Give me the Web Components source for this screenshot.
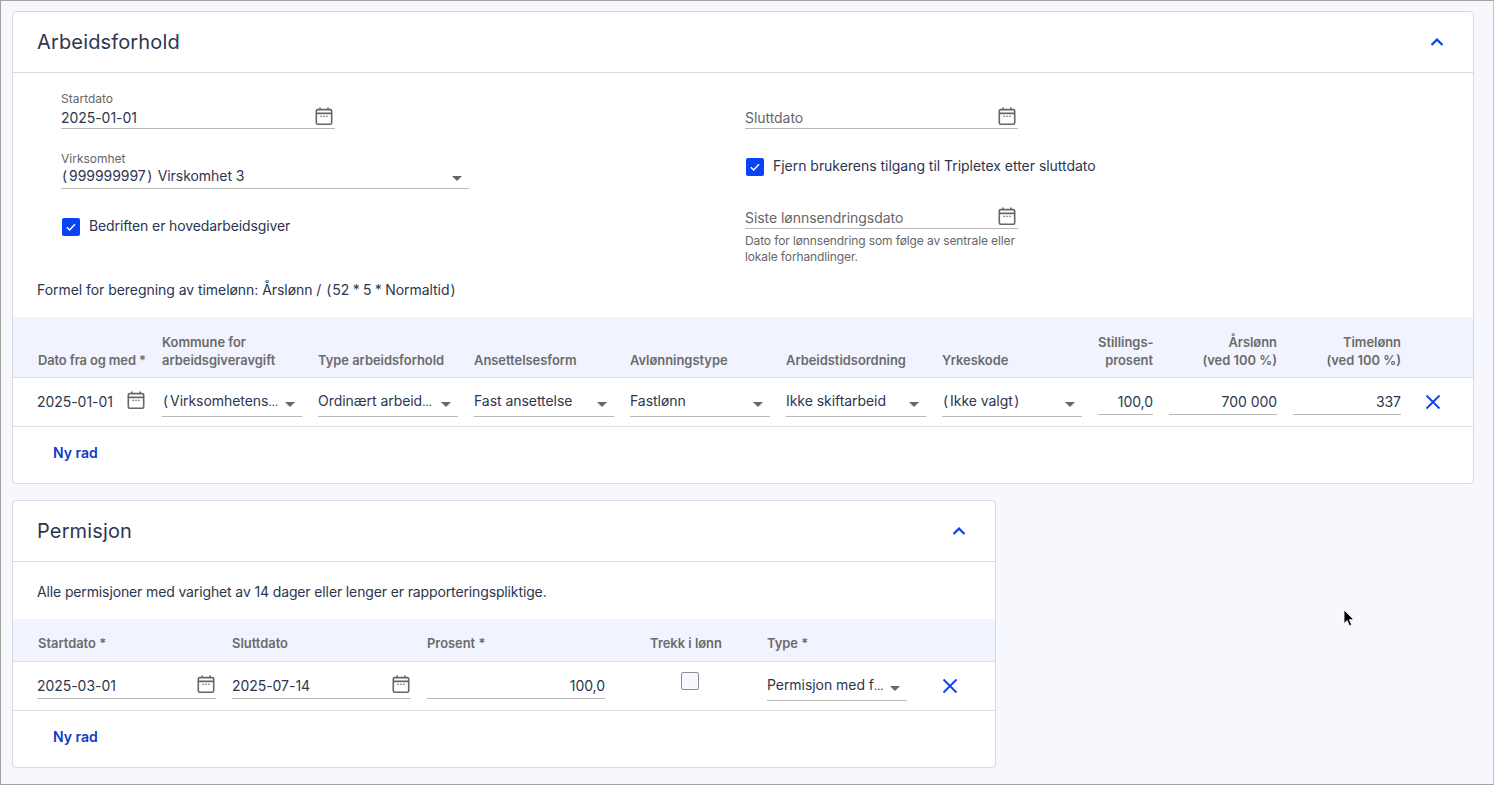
<!DOCTYPE html>
<html lang="no">
<head>
<meta charset="utf-8">
<title>Arbeidsforhold</title>
<style>
  html, body { margin: 0; padding: 0; }
  body { font-family: Inter, "Noto Sans", sans-serif; font-size: 14px; color: #2d3650; }
</style>
</head>
<body>
<tx-page>
  <tx-card heading="Arbeidsforhold" style="--card-width: 1462px">
    <tx-form>
      <div slot="left">
        <tx-field label="Startdato" value="2025-01-01" calendar style="width:274px"></tx-field>
        <tx-field select label="Virksomhet" value="(999999997) Virskomhet 3" style="width:408px; margin-top:23px"></tx-field>
        <tx-check checked style="margin-top:29px; letter-spacing:-.12px">Bedriften er hovedarbeidsgiver</tx-check>
      </div>
      <div slot="right">
        <tx-field placeholder="Sluttdato" calendar style="width:273px"></tx-field>
        <tx-check checked style="margin-top:29px; letter-spacing:-.03px">Fjern brukerens tilgang til Tripletex etter sluttdato</tx-check>
        <tx-field placeholder="Siste lønnsendringsdato" calendar help="Dato for lønnsendring som følge av sentrale eller lokale forhandlinger." style="width:273px; margin-top:16px"></tx-field>
      </div>
    </tx-form>
    <tx-note style="height:52px; padding-top:16px">Formel for beregning av timelønn: Årslønn / <span style="margin:0 1px">(</span><span style="word-spacing:-.5px">52 * 5 * Normaltid</span><span style="margin:0 1px">)</span></tx-note>
    <tx-row head style="--cols:109px repeat(6,140px) 55px 108px 108px 32px; --h:61px">
      <span style="padding-left:1px; white-space:nowrap; letter-spacing:-.1px">Dato fra og med *</span>
      <span>Kommune for<br>arbeidsgiveravgift</span>
      <span>Type arbeidsforhold</span>
      <span>Ansettelsesform</span>
      <span>Avlønningstype</span>
      <span>Arbeidstidsordning</span>
      <span>Yrkeskode</span>
      <span style="text-align:right">Stillings-<br>prosent</span>
      <span style="text-align:right">Årslønn<br>(ved 100 %)</span>
      <span style="text-align:right">Timelønn<br>(ved 100 %)</span>
      <span></span>
    </tx-row>
    <tx-row style="--cols:109px repeat(6,140px) 55px 108px 108px 32px; --h:49px">
      <tx-cell calendar plain value="2025-01-01"></tx-cell>
      <tx-cell select value="(Virksomhetens…"></tx-cell>
      <tx-cell select value="Ordinært arbeid…"></tx-cell>
      <tx-cell select value="Fast ansettelse"></tx-cell>
      <tx-cell select value="Fastlønn"></tx-cell>
      <tx-cell select value="Ikke skiftarbeid"></tx-cell>
      <tx-cell select value="(Ikke valgt)"></tx-cell>
      <tx-cell number value="100,0"></tx-cell>
      <tx-cell number value="700 000"></tx-cell>
      <tx-cell number value="337"></tx-cell>
      <tx-remove></tx-remove>
    </tx-row>
    <tx-add>Ny rad</tx-add>
  </tx-card>

  <tx-card heading="Permisjon" style="--card-width: 984px; margin-top:16px">
    <tx-note style="height:57px; padding-top:21px; letter-spacing:-.13px">Alle permisjoner med varighet av 14 dager eller lenger er rapporteringspliktige.</tx-note>
    <tx-row head short style="--cols:179px 179px 178px 130px 140px 54px; --h:43px">
      <span style="padding-left:1px">Startdato *</span>
      <span>Sluttdato</span>
      <span>Prosent *</span>
      <span style="text-align:center">Trekk i lønn</span>
      <span>Type *</span>
      <span></span>
    </tx-row>
    <tx-row style="--cols:179px 179px 178px 130px 140px 54px; --h:49px">
      <tx-cell calendar value="2025-03-01"></tx-cell>
      <tx-cell calendar value="2025-07-14"></tx-cell>
      <tx-cell number value="100,0"></tx-cell>
      <tx-box></tx-box>
      <tx-cell select value="Permisjon med f…"></tx-cell>
      <tx-remove></tx-remove>
    </tx-row>
    <tx-add>Ny rad</tx-add>
  </tx-card>
  <tx-cursor></tx-cursor>
</tx-page>

<script>
const calendarSvg = `<svg class="cal" width="18" height="18" viewBox="0 0 18 18" fill="none" stroke="#666" stroke-width="1.6">
  <rect x="1.3" y="2.6" width="15.4" height="14.6" rx="1.4"/>
  <path d="M1.3 6.4h15.4M5 .4v2.6M13 .4v2.6"/>
  <path d="M5.4 9.4h1.4M8.3 9.4h1.4M11.2 9.4h1.4" stroke-width="1.3"/>
</svg>`;
const caretSvg = `<svg class="caret" width="10" height="5" viewBox="0 0 10 5"><path d="M0 0h10L5 5z" fill="#666"/></svg>`;

// the reference font has wide parens and a tight ellipsis, so these get their own span
function setValue(el, text) {
  el.textContent = "";
  for (const part of text.split(/([()…])/)) {
    if (!part) continue;
    if (part === "(" || part === ")" || part === "…") {
      const s = document.createElement("span");
      s.textContent = part;
      s.style.cssText = part === "(" ? "margin:0 2px 0 1px"
        : part === ")" ? "margin:0 1.5px"
        : "font-size:11px;letter-spacing:-.6px";
      el.appendChild(s);
    } else {
      el.appendChild(document.createTextNode(part));
    }
  }
}

class TxPage extends HTMLElement {
  constructor() {
    super();
    this.attachShadow({ mode: "open" });
    this.shadowRoot.innerHTML = `
      <style>
        :host {
          display: flex;
          flex-direction: column;
          align-items: flex-start;
          box-sizing: border-box;
          position: relative;
          width: 1494px;
          height: 785px;
          overflow: hidden;
          padding: 10px 0 0 11px;
          background: #f6f8fe;
          border: 1px solid #a3a3a3;
          border-right-color: #c4c4c4;
        }
      </style>
      <slot></slot>`;
  }
}

class TxCard extends HTMLElement {
  constructor() {
    super();
    this.attachShadow({ mode: "open" });
    this.shadowRoot.innerHTML = `
      <style>
        :host {
          display: block;
          box-sizing: border-box;
          width: var(--card-width);
          background: #fff;
          border: 1px solid #d6d9e0;
          border-radius: 4px;
        }
        header {
          display: flex;
          align-items: center;
          justify-content: space-between;
          box-sizing: border-box;
          height: 61px;
          padding: 0 28px 0 24px;
          border-bottom: 1px solid #d6d9e0;
        }
        h2 {
          margin: 0;
          font-size: 20px;
          font-weight: 400;
          letter-spacing: .15px;
          color: #2d3650;
        }
        svg { display: block; }
      </style>
      <header>
        <h2></h2>
        <svg width="16" height="10" viewBox="0 0 16 10" fill="none"><path d="M2.5 8 8 2.6 13.5 8" stroke="#0a43f5" stroke-width="2.2"/></svg>
      </header>
      <slot></slot>`;
    this.shadowRoot.querySelector("h2").textContent = this.getAttribute("heading");
  }
}

class TxForm extends HTMLElement {
  constructor() {
    super();
    this.attachShadow({ mode: "open" });
    this.shadowRoot.innerHTML = `
      <style>
        :host {
          display: grid;
          grid-template-columns: 684px 1fr;
          padding: 19px 0 0 48px;
        }
      </style>
      <slot name="left"></slot>
      <slot name="right"></slot>`;
  }
}

class TxField extends HTMLElement {
  constructor() {
    super();
    this.attachShadow({ mode: "open" });
    const help = this.getAttribute("help");
    const isSelect = this.hasAttribute("select");
    this.shadowRoot.innerHTML = `
      <style>
        :host { display: block; box-sizing: border-box; }
        label {
          display: block;
          height: 14px;
          font-size: 12px;
          line-height: 14px;
          color: #666;
        }
        .line {
          display: flex;
          align-items: center;
          justify-content: space-between;
          box-sizing: border-box;
          height: 23px;
          padding-bottom: ${isSelect ? 3 : 0}px;
          border-bottom: 1px solid #b8b8b8;
        }
        .val { font-size: 14px; letter-spacing: -.05px; color: #2d3650; }
        .ph { font-size: 14px; letter-spacing: -.05px; color: #666; }
        .cal { margin: -3px 2px 0 0; }
        .caret { margin: 5px 7px 0 0; }
        p {
          margin: 4px 0 0;
          font-size: 12px;
          line-height: 16px;
          letter-spacing: -.12px;
          color: #666;
        }
      </style>
      <label></label>
      <div class="line"><span></span>${this.hasAttribute("calendar") ? calendarSvg : ""}${isSelect ? caretSvg : ""}</div>
      ${help ? "<p></p>" : ""}`;
    const span = this.shadowRoot.querySelector(".line span");
    const ph = this.getAttribute("placeholder");
    span.className = ph ? "ph" : "val";
    setValue(span, ph || this.getAttribute("value"));
    this.shadowRoot.querySelector("label").textContent = this.getAttribute("label") || "\u00a0";
    if (help) this.shadowRoot.querySelector("p").textContent = help;
  }
}

class TxCheck extends HTMLElement {
  constructor() {
    super();
    this.attachShadow({ mode: "open" });
    this.shadowRoot.innerHTML = `
      <style>
        :host {
          display: flex;
          align-items: center;
          gap: 9px;
          height: 18px;
          padding-left: 1px;
          font-size: 14px;
          letter-spacing: -.05px;
          color: #2d3650;
        }
        svg { display: block; }
        div { margin-top: -4px; }
      </style>
      <svg width="18" height="18" viewBox="0 0 18 18"><rect width="18" height="18" rx="2" fill="#0a43f5"/><path d="M4.8 9.3 7.6 12l5.4-5.8" fill="none" stroke="#fff" stroke-width="1.5"/></svg>
      <div><slot></slot></div>`;
  }
}

class TxNote extends HTMLElement {
  constructor() {
    super();
    this.attachShadow({ mode: "open" });
    this.shadowRoot.innerHTML = `
      <style>
        :host {
          display: block;
          box-sizing: border-box;
          padding-left: 24px;
          font-size: 14px;
          line-height: 17px;
          letter-spacing: -.05px;
          color: #2d3650;
        }
      </style>
      <slot></slot>`;
  }
}

class TxRow extends HTMLElement {
  constructor() {
    super();
    this.attachShadow({ mode: "open" });
    const head = this.hasAttribute("head");
    this.shadowRoot.innerHTML = `
      <style>
        :host {
          display: grid;
          grid-template-columns: var(--cols);
          column-gap: 16px;
          box-sizing: border-box;
          height: var(--h);
          padding-left: 24px;
          border-bottom: 1px solid #dcdfe5;
          ${head ? `
          align-items: end;
          padding-bottom: ${this.hasAttribute("short") ? 8 : 7}px;
          background: #f1f4fe;
          font-size: 12.9px;
          line-height: 18px;
          font-weight: 600;
          color: #6b6b6b;
          ` : `align-items: stretch;`}
        }
        ::slotted(*) { min-width: 0; }
      </style>
      <slot></slot>`;
  }
}

class TxCell extends HTMLElement {
  constructor() {
    super();
    this.attachShadow({ mode: "open" });
    const isNumber = this.hasAttribute("number");
    const isSelect = this.hasAttribute("select");
    const isCal = this.hasAttribute("calendar");
    const plain = this.hasAttribute("plain");
    this.shadowRoot.innerHTML = `
      <style>
        :host { display: block; padding-top: 9px; }
        .line {
          display: flex;
          align-items: center;
          justify-content: ${isNumber ? "flex-end" : "space-between"};
          box-sizing: border-box;
          height: ${isSelect ? 30 : 28}px;
          border-bottom: 1px solid ${plain ? "transparent" : "#b8b8b8"};
          padding: ${isSelect ? "0 0 3px" : "1px 0 0"};
        }
        span { font-size: 14px; letter-spacing: -.05px; color: #2d3650; white-space: nowrap; }
        .cal { margin: -3px 1px 0 0; }
        .caret { margin: 8px 7px 0 0; }
      </style>
      <div class="line"><span></span>${isCal ? calendarSvg : ""}${isSelect ? caretSvg : ""}</div>`;
    setValue(this.shadowRoot.querySelector("span"), this.getAttribute("value"));
  }
}

class TxBox extends HTMLElement {
  constructor() {
    super();
    this.attachShadow({ mode: "open" });
    this.shadowRoot.innerHTML = `
      <style>
        :host { display: flex; justify-content: center; padding: 10px 0 0 8px; }
        div {
          box-sizing: border-box;
          width: 18px;
          height: 18px;
          background: #f6f8fe;
          border: 1px solid #8a8d96;
          border-radius: 2px;
        }
      </style>
      <div></div>`;
  }
}

class TxRemove extends HTMLElement {
  constructor() {
    super();
    this.attachShadow({ mode: "open" });
    this.shadowRoot.innerHTML = `
      <style>
        :host { display: flex; align-items: center; justify-content: center; height: 100%; }
        svg { display: block; }
      </style>
      <svg width="16" height="16" viewBox="0 0 16 16" fill="none" stroke="#0a43f5" stroke-width="1.8"><path d="M1.5 1.5l13 13M14.5 1.5l-13 13"/></svg>`;
  }
}

class TxAdd extends HTMLElement {
  constructor() {
    super();
    this.attachShadow({ mode: "open" });
    this.shadowRoot.innerHTML = `
      <style>
        :host {
          display: block;
          box-sizing: border-box;
          height: 56px;
          padding: 17px 0 0 40px;
          font-size: 14px;
          line-height: 17px;
          font-weight: 600;
          color: #0a3ccb;
        }
      </style>
      <slot></slot>`;
  }
}

class TxCursor extends HTMLElement {
  constructor() {
    super();
    this.attachShadow({ mode: "open" });
    this.shadowRoot.innerHTML = `
      <style>
        :host { position: absolute; left: 1342px; top: 608px; width: 12px; height: 19px; }
        svg { display: block; }
      </style>
      <svg width="12" height="19" viewBox="0 0 12 19"><path d="M1 1v13.5l3.2-3 2.2 5.2 2.2-1-2.2-5h4.4z" fill="#000" stroke="#fff" stroke-width=".8"/></svg>`;
  }
}

customElements.define("tx-page", TxPage);
customElements.define("tx-card", TxCard);
customElements.define("tx-form", TxForm);
customElements.define("tx-field", TxField);
customElements.define("tx-check", TxCheck);
customElements.define("tx-note", TxNote);
customElements.define("tx-row", TxRow);
customElements.define("tx-cell", TxCell);
customElements.define("tx-box", TxBox);
customElements.define("tx-remove", TxRemove);
customElements.define("tx-add", TxAdd);
customElements.define("tx-cursor", TxCursor);
</script>
</body>
</html>
